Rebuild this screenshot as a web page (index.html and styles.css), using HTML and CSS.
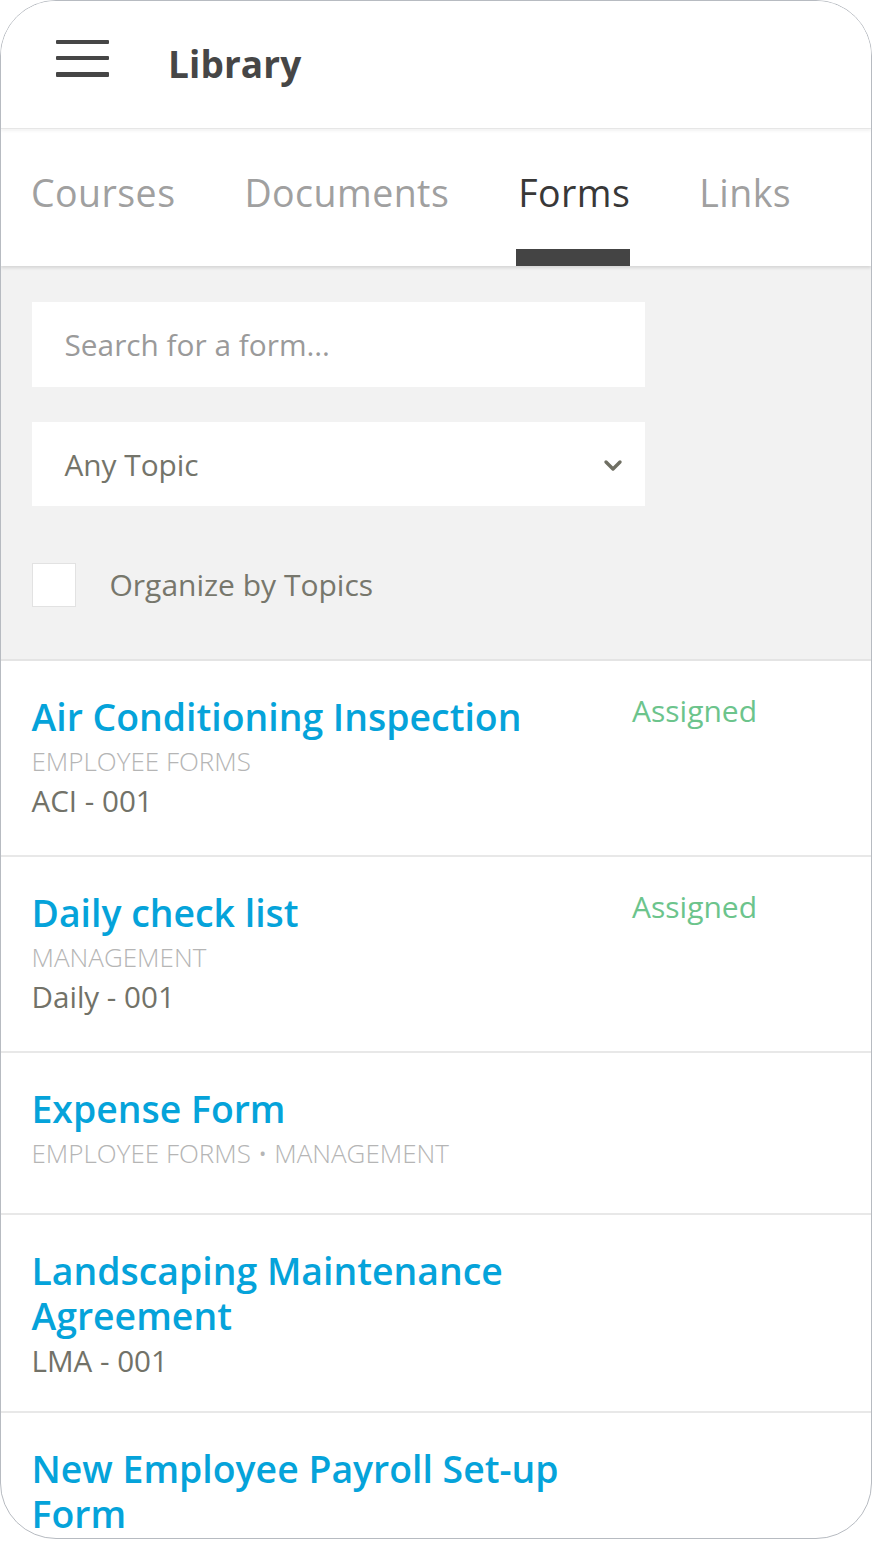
FILE: index.html
```html
<!DOCTYPE html>
<html lang="en">
<head>
<meta charset="utf-8">
<title>Library</title>
<link rel="stylesheet" href="styles.css">
</head>
<body>
<div class="phone">
  <header class="topbar">
    <button class="menu" aria-label="Menu"><span></span><span></span><span></span></button>
    <h1 class="title">Library</h1>
  </header>
  <nav class="tabs">
    <a class="tab">Courses</a>
    <a class="tab">Documents</a>
    <a class="tab active">Forms</a>
    <a class="tab">Links</a>
  </nav>
  <section class="filters">
    <div class="field">Search for a form...</div>
    <div class="field select">
      <span>Any Topic</span>
      <svg class="chev" width="20" height="14" viewBox="0 0 20 14"><path d="M3 3 L10 10 L17 3" fill="none" stroke="#6f6f63" stroke-width="3.4" stroke-linecap="round" stroke-linejoin="round"/></svg>
    </div>
    <label class="check"><span class="box"></span><span>Organize by Topics</span></label>
  </section>
  <ul class="list">
    <li class="item">
      <div class="main">
        <div class="name">Air Conditioning Inspection</div>
        <div class="topic">EMPLOYEE FORMS</div>
        <div class="code">ACI - 001</div>
      </div>
      <div class="status">Assigned</div>
    </li>
    <li class="item">
      <div class="main">
        <div class="name">Daily check list</div>
        <div class="topic">MANAGEMENT</div>
        <div class="code">Daily - 001</div>
      </div>
      <div class="status">Assigned</div>
    </li>
    <li class="item">
      <div class="main">
        <div class="name">Expense Form</div>
        <div class="topic">EMPLOYEE FORMS • MANAGEMENT</div>
      </div>
      <div class="status"></div>
    </li>
    <li class="item">
      <div class="main">
        <div class="name">Landscaping Maintenance Agreement</div>
        <div class="code">LMA - 001</div>
      </div>
      <div class="status"></div>
    </li>
    <li class="item">
      <div class="main">
        <div class="name">New Employee Payroll Set-up Form</div>
      </div>
      <div class="status"></div>
    </li>
  </ul>
</div>
</body>
</html>
```
FILE: styles.css
```css
html, body {
  margin: 0;
  padding: 0;
  background: #ffffff;
}
body {
  font-family: "Open Sans", "Liberation Sans", sans-serif;
  width: 873px;
  height: 1566px;
  overflow: hidden;
}
.phone {
  box-sizing: border-box;
  width: 872px;
  height: 1539px;
  border: 1.5px solid #b7bbc1;
  border-radius: 56px;
  overflow: hidden;
  background: #ffffff;
  display: flex;
  flex-direction: column;
}
.topbar {
  height: 127px;
  flex: none;
  display: flex;
  align-items: center;
  padding-left: 55px;
  gap: 59px;
  box-sizing: border-box;
  position: relative;
  z-index: 2;
  box-shadow: 0 1px 0 #e6e6e6, 0 3px 3px rgba(0,0,0,0.05);
  background: #fff;
}
.menu {
  border: 0;
  background: none;
  padding: 0;
  width: 53px;
  height: 37px;
  display: flex;
  flex-direction: column;
  justify-content: space-between;
  margin-top: -13px;
}
.menu span {
  display: block;
  height: 4.5px;
  background: #464646;
  border-radius: 1px;
}
.title {
  margin: 0;
  font-size: 37px;
  font-weight: 700;
  color: #464646;
  letter-spacing: 0.1px;
  margin-top: -2px;
}
.tabs {
  flex: none;
  height: 135px;
  margin-top: 3px;
  display: flex;
  padding-left: 30px;
  gap: 69px;
  box-sizing: border-box;
  background: #fff;
  position: relative;
  z-index: 1;
  box-shadow: 0 2px 3px rgba(0,0,0,0.12);
}
.tab {
  font-size: 37.5px;
  color: #a0a0a0;
  line-height: 1;
  padding-top: 43px;
  height: 100%;
  box-sizing: border-box;
  position: relative;
  letter-spacing: 0.45px;
}
.tab.active {
  color: #383838;
}
.tab.active::after {
  content: "";
  position: absolute;
  left: -2px;
  right: 0;
  bottom: 0;
  height: 17px;
  background: #444444;
}
.filters {
  flex: none;
  background: #f2f2f2;
  padding: 36px 0 0 30.5px;
  height: 395px;
  box-sizing: border-box;
  border-bottom: 2px solid #e4e4e4;
}
.field {
  width: 613px;
  height: 85px;
  background: #fff;
  box-sizing: border-box;
  padding-left: 33px;
  display: flex;
  align-items: center;
  font-size: 29.8px;
  color: #9a9a9a;
  margin-bottom: 35px;
}
.field.select {
  color: #74746a;
  justify-content: space-between;
  padding-right: 22px;
  height: 84px;
}
.chev {
  margin-top: 4px;
}
.check {
  display: flex;
  align-items: center;
  gap: 34px;
  font-size: 30px;
  color: #77776c;
  margin-top: 55px;
}
.box {
  width: 44px;
  height: 44px;
  box-sizing: border-box;
  background: #fff;
  border: 1.5px solid #e2e2e2;
  margin-top: 2px;
}
.list {
  list-style: none;
  margin: 0;
  padding: 0;
}
.item {
  display: grid;
  grid-template-columns: 1fr 124px;
  column-gap: 40px;
  padding: 33px 115px 36px 30.5px;
  border-bottom: 2px solid #e8e8e8;
}
.name {
  font-size: 37.4px;
  font-weight: 600;
  color: #05a3da;
  line-height: 45px;
}
.topic {
  font-size: 26px;
  font-weight: 300;
  color: #b5b5b5;
  line-height: 44px;
}
.topic:last-child {
  margin-bottom: 2px;
}
.code {
  font-size: 29.6px;
  color: #727268;
  line-height: 36px;
}
.name + .code {
  margin-top: 5px;
  margin-bottom: -4px;
}
.status {
  font-size: 30px;
  color: #6cc48c;
  line-height: 34px;
  white-space: nowrap;
}
```
